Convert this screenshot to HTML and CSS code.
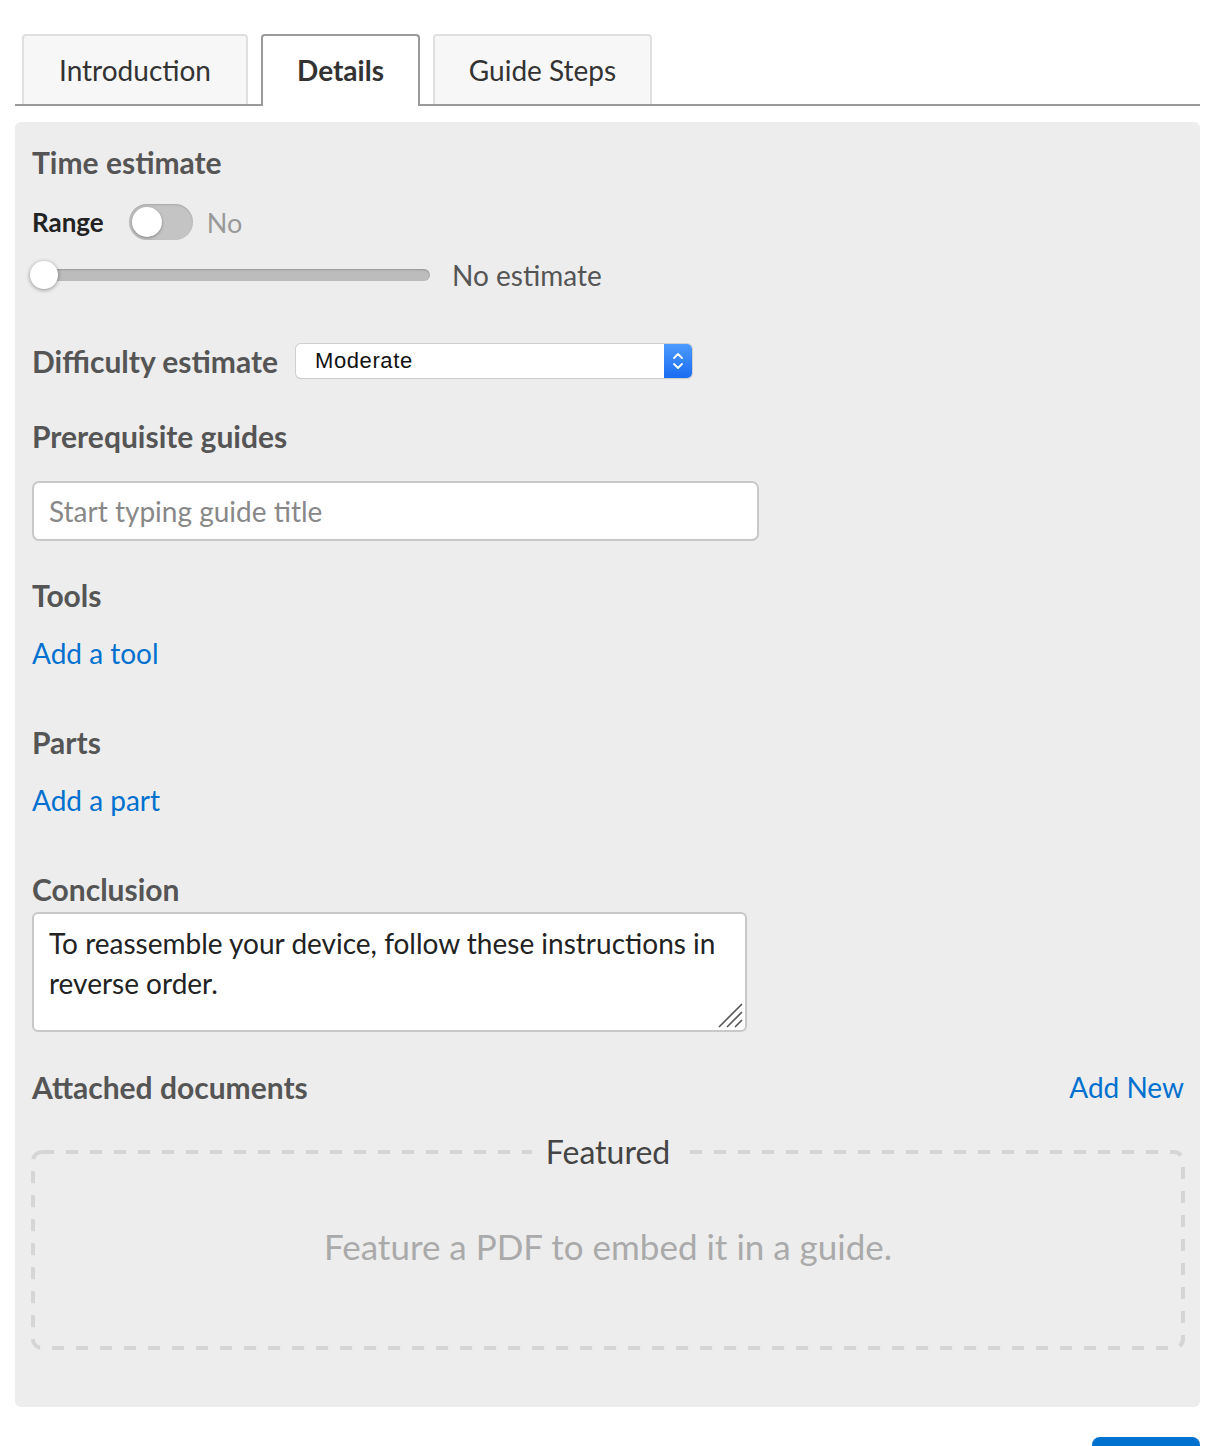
FILE: index.html
```html
<!DOCTYPE html>
<html>
<head>
<meta charset="utf-8">
<link rel="stylesheet" href="styles.css">
</head>
<body>
<div class="page">
  <div class="tabs">
    <div class="tab">Introduction</div>
    <div class="tab active">Details</div>
    <div class="tab">Guide Steps</div>
  </div>
  <div class="panel">
    <h3 class="heading h-time">Time estimate</h3>
    <div class="range-row">
      <span class="range-label">Range</span>
      <span class="toggle"><span class="knob"></span></span>
      <span class="toggle-text">No</span>
    </div>
    <div class="slider-row">
      <div class="slider"><span class="thumb"></span></div>
      <span class="slider-text">No estimate</span>
    </div>
    <div class="difficulty-row">
      <h3 class="heading">Difficulty estimate</h3>
      <div class="select">
        <span class="select-text">Moderate</span>
        <span class="stepper">
          <svg width="14" height="22" viewBox="0 0 14 22"><path d="M3 8 L7 4 L11 8" fill="none" stroke="#fff" stroke-width="1.8" stroke-linecap="round" stroke-linejoin="round"/><path d="M3 14 L7 18 L11 14" fill="none" stroke="#fff" stroke-width="1.8" stroke-linecap="round" stroke-linejoin="round"/></svg>
        </span>
      </div>
    </div>
    <h3 class="heading h-prereq">Prerequisite guides</h3>
    <div class="text-input">Start typing guide title</div>
    <h3 class="heading h-tools">Tools</h3>
    <a class="link add-tool">Add a tool</a>
    <h3 class="heading h-parts">Parts</h3>
    <a class="link add-part">Add a part</a>
    <h3 class="heading h-conclusion">Conclusion</h3>
    <div class="textarea"><span class="textarea-text">To reassemble your device, follow these instructions in reverse order.</span><svg class="grip" width="28" height="28" viewBox="0 0 28 28"><path d="M26 3 L3 26 M26 11 L11 26 M26 19 L19 26" stroke="#555" stroke-width="1.6" fill="none"/></svg></div>
    <div class="docs-row">
      <h3 class="heading">Attached documents</h3>
      <a class="link add-new">Add New</a>
    </div>
    <fieldset class="featured">
      <svg class="dash-frame" width="1154" height="200" viewBox="0 0 1154 200"><rect x="2" y="2" width="1150" height="196" rx="9" ry="9" fill="none" stroke="#d5d5d5" stroke-width="4" stroke-dasharray="12 12"/></svg>
      <legend>Featured</legend>
      <p class="featured-text">Feature a PDF to embed it in a guide.</p>
    </fieldset>
  </div>
  <div class="actions">
    <button class="save">Save</button>
  </div>
</div>
</body>
</html>
```

FILE: styles.css
```css
* { box-sizing: border-box; }
html, body { margin: 0; padding: 0; background: #fff; }
body { font-family: "Lato", "Open Sans", sans-serif; color: #333; height: 1446px; overflow: hidden; }
.page { padding: 34px 28px 0 15px; }

.tabs { display: flex; gap: 13px; padding-left: 7px; border-bottom: 2px solid #9a9a9a; height: 72px; }
.tab { height: 70px; border: 2px solid #e0e0e0; border-bottom: none; border-radius: 4px 4px 0 0; background: #f7f7f7; font-size: 28px; line-height: 68px; color: #333; text-align: center; padding: 0; }
.tab:first-child { width: 226px; }
.tab.active { background: #fff; border-color: #9a9a9a; height: 72px; margin-bottom: -2px; font-weight: 700; width: 159px; }
.tab:last-child { width: 219px; }

.panel { margin-top: 16px; background: #ededed; border-radius: 6px; padding: 23px 16px 57px 17px; }
.heading { margin: 0; font-size: 30px; line-height: 34px; font-weight: 700; color: #555; }

.range-row { display: flex; align-items: center; height: 36px; margin-top: 25px; }
.range-label { font-size: 26px; font-weight: 700; color: #222; }
.toggle { position: relative; width: 64px; height: 36px; border-radius: 18px; background: #c4c4c4; margin-left: 25px; box-shadow: inset 0 1px 2px rgba(0,0,0,0.15); }
.knob { position: absolute; left: 3px; top: 3px; width: 30px; height: 30px; border-radius: 50%; background: #fff; box-shadow: 0 1px 3px rgba(0,0,0,0.35); }
.toggle-text { margin-left: 14px; font-size: 27px; color: #999; }

.slider-row { display: flex; align-items: center; height: 30px; margin-top: 20px; }
.slider { position: relative; width: 398px; height: 12px; border-radius: 6px; background: #bcbcbc; box-shadow: inset 0 1px 2px rgba(0,0,0,0.2); }
.thumb { position: absolute; left: -2px; top: -8px; width: 28px; height: 28px; border-radius: 50%; background: #fff; box-shadow: 0 1px 4px rgba(0,0,0,0.4); }
.slider-text { margin-left: 22px; font-size: 28px; color: #555; }

.difficulty-row { display: flex; align-items: center; height: 34px; margin-top: 54px; }
.select { display: flex; align-items: stretch; margin-left: 18px; width: 396px; height: 34px; background: #fff; border-radius: 5px; box-shadow: 0 0 0 1px #cfcfcf, 0 1px 1px rgba(0,0,0,0.2); overflow: hidden; }
.select-text { flex: 1; padding-left: 19px; font-family: "Liberation Sans", "Helvetica", sans-serif; font-size: 22px; line-height: 34px; color: #111; letter-spacing: 0.6px; }
.stepper { width: 28px; display: flex; align-items: center; justify-content: center; background: linear-gradient(#4c9bff, #1a6cf0); }

.h-prereq { margin-top: 41px; }
.text-input { margin-top: 28px; width: 727px; height: 60px; border: 2px solid #c8c8c8; border-radius: 7px; background: #fff; padding-left: 15px; font-size: 28px; line-height: 56px; color: #888; }

.h-tools { margin-top: 37px; }
.link { display: block; font-size: 28px; line-height: 34px; color: #0071ce; text-decoration: none; }
.add-tool { margin-top: 24px; }
.h-parts { margin-top: 55px; }
.add-part { margin-top: 24px; }
.h-conclusion { margin-top: 55px; }

.textarea { position: relative; margin-top: 6px; width: 715px; height: 120px; border: 2px solid #c8c8c8; border-radius: 6px; background: #fff; padding: 9px 8px 0 15px; font-size: 28px; line-height: 40px; color: #222; }
.textarea-text { display: block; }
.grip { position: absolute; right: 1px; bottom: 1px; }

.docs-row { display: flex; justify-content: space-between; align-items: center; height: 34px; margin-top: 38px; }
.add-new { font-size: 28px; }

.featured { position: relative; margin: 29px 0 0 0; width: 1152px; height: 217px; border: none; padding: 0; display: flex; align-items: center; justify-content: center; }
.dash-frame { position: absolute; left: -1px; top: -21px; z-index: 0; }
.featured legend { position: relative; z-index: 1; margin: 0 auto; padding: 0 14px; font-size: 32px; line-height: 38px; color: #444; background: #ededed; }
.featured-text { position: relative; margin: 0 0 30px 0; font-size: 35px; color: #aaa; }

.actions { display: flex; justify-content: flex-end; margin-top: 30px; }
.save { width: 108px; height: 70px; border: none; border-radius: 8px; background: #0071ce; color: #fff; font-family: "Lato", sans-serif; font-size: 24px; }
```
